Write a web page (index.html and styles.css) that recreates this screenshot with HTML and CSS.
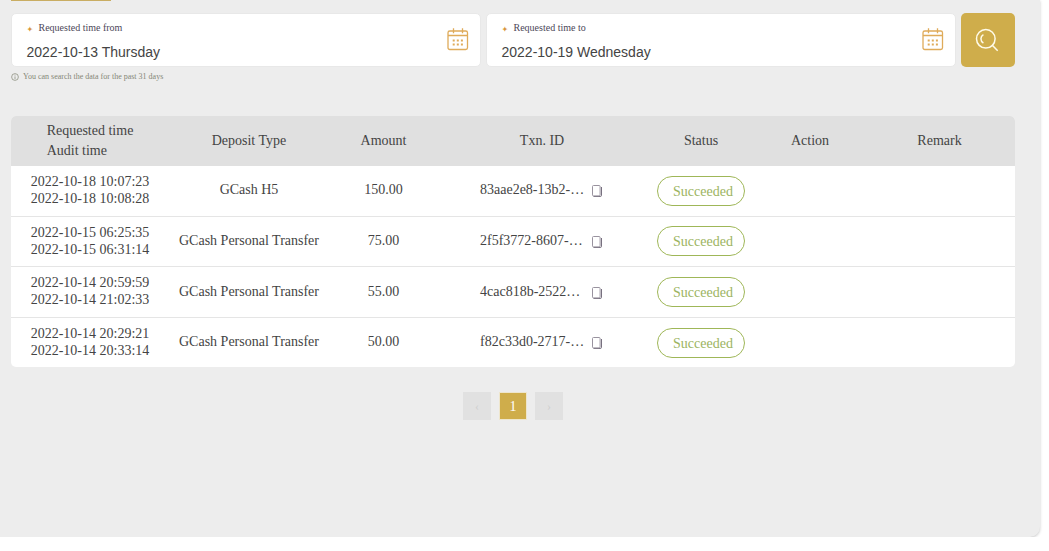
FILE: index.html
```
<!DOCTYPE html>
<html lang="en">
<head>
<meta charset="utf-8">
<title>Deposit records</title>
<link rel="stylesheet" href="styles.css">
</head>
<body>
<svg class="defs" aria-hidden="true">
  <symbol id="calendar" viewBox="0 0 22 24">
    <rect x="1" y="4" width="19.5" height="18.5" rx="1.8"/>
    <path d="M1 8.5h19.5M6.5 1.2v5M15.5 1.2v5"/>
    <path class="dots" d="M5.7 13.5h2M9.8 13.5h2M13.9 13.5h2M5.7 17.5h2M9.8 17.5h2M13.9 17.5h2"/>
  </symbol>
  <symbol id="copy" viewBox="0 0 12 14">
    <path class="back" d="M2.5 12.5h6.7q1.3 0 1.3-1.3V3"/>
    <rect x="1.5" y="1.5" width="7.6" height="10.4" rx="1"/>
  </symbol>
</svg>
<main class="panel">
  <div class="tab-line"></div>
  <form class="search">
    <div class="field">
      <div>
        <div class="label"><i>✦</i>Requested time from</div>
        <div class="value">2022-10-13 Thursday</div>
      </div>
      <svg class="calendar"><use href="#calendar"/></svg>
    </div>
    <div class="field">
      <div>
        <div class="label"><i>✦</i>Requested time to</div>
        <div class="value">2022-10-19 Wednesday</div>
      </div>
      <svg class="calendar"><use href="#calendar"/></svg>
    </div>
    <button class="go" type="button" aria-label="Search">
      <svg viewBox="0 0 24 24"><circle cx="10.8" cy="10.8" r="9.3"/><path d="M17.3 17.3l5.4 5.4M8.4 6.6a4.8 4.8 0 0 0 0 8.4"/></svg>
    </button>
  </form>
  <div class="hint">
    <svg viewBox="0 0 9 9"><circle cx="4.5" cy="4.5" r="3.8"/><path d="M4.5 2v.9M4.5 3.8v3"/></svg>
    <span>You can search the data for the past 31 days</span>
  </div>

  <section class="table">
    <div class="row head">
      <div class="times"><span>Requested time<br>Audit time</span></div>
      <div>Deposit Type</div><div>Amount</div><div>Txn. ID</div><div>Status</div><div>Action</div><div>Remark</div>
    </div>
    <div class="row">
      <div class="times">2022-10-18 10:07:23<br>2022-10-18 10:08:28</div>
      <div>GCash H5</div><div>150.00</div>
      <div class="txn"><span>83aae2e8-13b2-…</span><svg><use href="#copy"/></svg></div>
      <div class="status"><span>Succeeded</span></div><div></div><div></div>
    </div>
    <div class="row short">
      <div class="times">2022-10-15 06:25:35<br>2022-10-15 06:31:14</div>
      <div>GCash Personal Transfer</div><div>75.00</div>
      <div class="txn"><span>2f5f3772-8607-…</span><svg><use href="#copy"/></svg></div>
      <div class="status"><span>Succeeded</span></div><div></div><div></div>
    </div>
    <div class="row third">
      <div class="times">2022-10-14 20:59:59<br>2022-10-14 21:02:33</div>
      <div>GCash Personal Transfer</div><div>55.00</div>
      <div class="txn"><span>4cac818b-2522…</span><svg><use href="#copy"/></svg></div>
      <div class="status"><span>Succeeded</span></div><div></div><div></div>
    </div>
    <div class="row last">
      <div class="times">2022-10-14 20:29:21<br>2022-10-14 20:33:14</div>
      <div>GCash Personal Transfer</div><div>50.00</div>
      <div class="txn"><span>f82c33d0-2717-…</span><svg><use href="#copy"/></svg></div>
      <div class="status"><span>Succeeded</span></div><div></div><div></div>
    </div>
  </section>

  <nav class="pager">
    <span class="page">‹</span><span class="page current">1</span><span class="page">›</span>
  </nav>
</main>
</body>
</html>
```
FILE: styles.css
```
* { box-sizing: border-box; }
body {
  margin: 0;
  background: #fff;
  color: #444;
  font: 14px/17px "Liberation Serif", serif;
}
.defs { display: none; }
.panel {
  width: 1040px;
  height: 537px;
  padding-left: 11px;
  background: #ededed;
  border-radius: 0 0 10px 0;
  box-shadow: 0 1px 3px rgba(0, 0, 0, .22);
}
.tab-line { width: 100px; height: 1px; background: #c9ad62; }
.search { display: flex; padding-top: 12px; }
.field {
  display: flex;
  justify-content: space-between;
  width: 470px;
  height: 54px;
  margin-right: 5px;
  padding: 7px 11px 0 14.5px;
  background: #fff;
  border: 1px solid #e8e8e8;
  border-radius: 5px;
}
.label { display: flex; height: 13px; font-size: 10px; line-height: 13px; color: #4c4759; }
.label i { width: 12px; color: #d8953c; font: 8px/17px "DejaVu Sans", sans-serif; }
.value { margin-top: 10px; font: 14px/17px "Liberation Sans", sans-serif; }
.calendar { width: 22px; height: 24px; margin-top: 6px; fill: none; stroke: #dfab5a; stroke-width: 1.3; }
.dots { stroke-width: 2; }
.go {
  display: flex;
  align-items: center;
  justify-content: center;
  width: 54px;
  height: 54px;
  padding: 0 2px 1px 0;
  border: 0;
  border-radius: 5px;
  background: #cfad4b;
}
.go svg { width: 24px; height: 24px; fill: none; stroke: #fffbe9; stroke-width: 1.5; }
.hint { display: flex; align-items: center; gap: 4px; height: 10px; margin-top: 5px; font-size: 8px; line-height: 10px; color: #858777; }
.hint svg { width: 8px; height: 8px; fill: none; stroke: #858777; stroke-width: .8; }
.table { width: 1004px; margin-top: 34px; border-radius: 5px; overflow: hidden; background: #fff; }
.row {
  display: grid;
  grid-template-columns: 158px 160px 109px 208px 110px 108px 151px;
  align-items: center;
  height: 51px;
  padding-bottom: 2px;
  border-bottom: 1px solid #e5e5e5;
  text-align: center;
}
.row > div { padding-bottom: 2px; }
.row > .times { padding-bottom: 0; }
.row.short { height: 50px; }
.row.short > div:not(.times):not(.status):not(.txn) { padding-bottom: 0; }
.row.short > .txn { padding-bottom: 1px; }
.row.third > div:not(.times):not(.status) { padding-bottom: 0; }
.row.last { height: 49px; border: 0; padding-bottom: 0; }
.row.last > .times { padding-bottom: 2px; }
.row.head { height: 50px; padding: 0; border: 0; background: #e0e0e0; }
.head .times { display: flex; justify-content: center; text-align: left; line-height: 20px; }
.txn { display: flex; align-items: center; padding-left: 42px; text-align: left; }
.txn span { width: 111px; }
.txn svg { width: 12px; height: 14px; margin-top: 3px; fill: none; stroke: #99939f; stroke-width: 1; }
.back { stroke: #77707f; }
.row > .status { display: flex; justify-content: center; padding-bottom: 0; }
.row:not(.head) > .status { padding-top: 2px; }
.row.short > .status, .row.last > .status { padding-top: 0; }
.status span {
  width: 88px;
  height: 30px;
  padding-left: 4px;
  border: 1px solid #9fb758;
  border-radius: 15px;
  line-height: 30px;
  color: #9cb461;
}
.row.head > .status { padding: 0; }
.pager { display: flex; justify-content: center; gap: 8px; width: 1004px; margin-top: 25px; }
.page { width: 28px; height: 28px; background: #e1e1e1; color: #cfcfcf; font-size: 12px; line-height: 28px; text-align: center; }
.page.current { background: #cfad4b; border: 1px solid #eee6cd; color: #fff; font-size: 14px; }
```
